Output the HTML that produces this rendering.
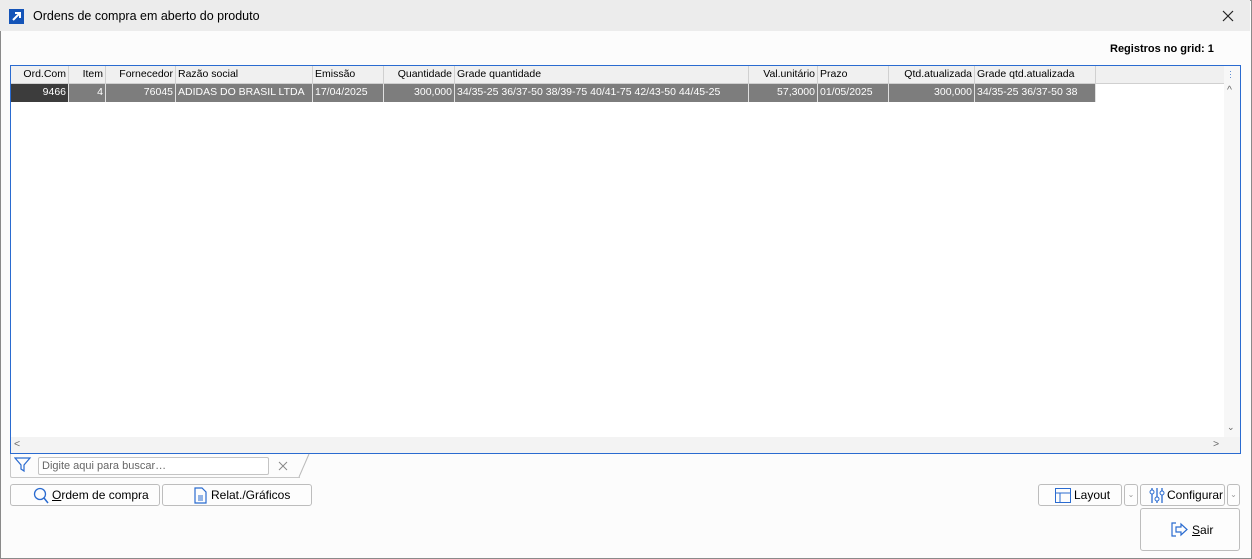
<!DOCTYPE html><html><head><style>
*{margin:0;padding:0;box-sizing:border-box}
body{width:1252px;height:559px;background:#fcfcfc;font-family:"Liberation Sans",sans-serif;font-size:11px;color:#000;position:relative;overflow:hidden}
.win{position:absolute;left:0;top:0;width:1252px;height:559px;border:1px solid #8a8a8a}
.title{position:absolute;left:0;top:0;width:1250px;height:31px;background:#ececec}
.title .t{position:absolute;left:33px;top:9px;font-size:12.5px}
.ico{position:absolute;left:9px;top:9px;width:15px;height:15px;background:#1454b8}
.a{position:absolute}
.grid{position:absolute;left:10px;top:65px;width:1231px;height:389px;border:1px solid #2a6bd0;background:#fff;font-size:10.5px}
.hd,.rw{position:absolute;height:18px;line-height:17px;white-space:nowrap;overflow:hidden;padding:0 2px}
.hd{top:0;background:#f0f0f0;border-right:1px solid #d0d0d0;border-bottom:1px solid #d0d0d0}
.rw{top:18px;background:#7d7d7d;color:#fff;border-right:1px solid #e0e0e0}
.r{text-align:right}
.btn{position:absolute;height:22px;border:1px solid #bdbdbd;border-radius:3px;background:#fdfdfd;line-height:20px;font-size:12px}
</style></head><body><div class="win"></div>
<div class="title"><div class="ico"><svg width="15" height="15"><path d="M4 11 L11 4 M6 4 H11 V9" stroke="#fff" stroke-width="2" fill="none"/></svg></div><div class="t">Ordens de compra em aberto do produto</div>
<svg class="a" style="left:1222px;top:10px" width="12" height="12"><path d="M1 1 L11 11 M11 1 L1 11" stroke="#222" stroke-width="1.2"/></svg></div>
<div class="a" style="left:1110px;top:43px;font-weight:bold;font-size:11px">Registros no grid: 1</div>
<div class="grid">
<div class="hd r" style="left:0;width:58px">Ord.Com</div>
<div class="hd r" style="left:58px;width:37px">Item</div>
<div class="hd r" style="left:95px;width:70px">Fornecedor</div>
<div class="hd" style="left:165px;width:137px">Razão social</div>
<div class="hd" style="left:302px;width:71px">Emissão</div>
<div class="hd r" style="left:373px;width:71px">Quantidade</div>
<div class="hd" style="left:444px;width:294px">Grade quantidade</div>
<div class="hd r" style="left:738px;width:69px">Val.unitário</div>
<div class="hd" style="left:807px;width:71px">Prazo</div>
<div class="hd r" style="left:878px;width:86px">Qtd.atualizada</div>
<div class="hd" style="left:964px;width:121px">Grade qtd.atualizada</div>
<div class="hd" style="left:1085px;width:129px;border-right:none"></div>
<div class="rw r" style="left:0;width:58px;background:#3c3c3c">9466</div>
<div class="rw r" style="left:58px;width:37px">4</div>
<div class="rw r" style="left:95px;width:70px">76045</div>
<div class="rw" style="left:165px;width:137px">ADIDAS DO BRASIL LTDA</div>
<div class="rw" style="left:302px;width:71px">17/04/2025</div>
<div class="rw r" style="left:373px;width:71px">300,000</div>
<div class="rw" style="left:444px;width:294px">34/35-25 36/37-50 38/39-75 40/41-75 42/43-50 44/45-25</div>
<div class="rw r" style="left:738px;width:69px">57,3000</div>
<div class="rw" style="left:807px;width:71px">01/05/2025</div>
<div class="rw r" style="left:878px;width:86px">300,000</div>
<div class="rw" style="left:964px;width:121px">34/35-25 36/37-50 38</div>
<div class="a" style="left:1213px;top:0;width:16px;height:371px;background:#f7f7f7"></div>
<div class="a" style="left:1218px;top:4px;color:#4a7fd0;font-size:9px;line-height:3px">·<br>·<br>·</div>
<div class="a" style="left:1216px;top:18px;color:#666">^</div>
<div class="a" style="left:1216px;top:356px;color:#666;font-size:9px">⌄</div>
<div class="a" style="left:0;top:371px;width:1229px;height:16px;background:#f3f3f3"></div>
<div class="a" style="left:3px;top:372px;color:#666">&lt;</div>
<div class="a" style="left:1202px;top:372px;color:#666">&gt;</div>
</div>
<div class="a" style="left:10px;top:454px;width:290px;height:24px;border:1px solid #c8c8c8;border-top:none;border-right:none;border-radius:0 0 0 2px"></div>
<svg class="a" style="left:14px;top:457px" width="18" height="16"><path d="M1 1 H16 L10 8 V14 L7 12 V8 Z" fill="none" stroke="#2a6bd0" stroke-width="1.2"/></svg>
<div class="a" style="left:38px;top:457px;width:231px;height:18px;border:1px solid #c4c4c4;border-radius:2px;background:#fff;color:#666;line-height:16px;padding-left:3px">Digite aqui para buscar…</div>
<svg class="a" style="left:278px;top:461px" width="10" height="10"><path d="M1 1 L9 9 M9 1 L1 9" stroke="#888" stroke-width="1"/></svg>
<svg class="a" style="left:290px;top:453px" width="20" height="26"><path d="M19 1 L9 24" stroke="#bbb"/></svg>
<div class="btn" style="left:10px;top:484px;width:150px"><svg class="a" style="left:22px;top:2px" width="16" height="17"><circle cx="7" cy="7" r="5.5" fill="none" stroke="#2a6bd0" stroke-width="1.3"/><path d="M11 11 L15 16" stroke="#2a6bd0" stroke-width="1.5"/></svg><span class="a" style="left:41px;top:0"><u>O</u>rdem de compra</span></div>
<div class="btn" style="left:162px;top:484px;width:150px"><svg class="a" style="left:31px;top:2px" width="14" height="17"><path d="M1 1 H8 L12 5 V16 H1 Z" fill="none" stroke="#2a6bd0" stroke-width="1.2"/><path d="M4 9 H9 M4 11 H9 M4 13 H9" stroke="#2a6bd0"/></svg><span class="a" style="left:48px;top:0">Relat./Gráficos</span></div>
<div class="btn" style="left:1038px;top:484px;width:84px"><svg class="a" style="left:16px;top:3px" width="16" height="15"><rect x="0.5" y="0.5" width="15" height="14" fill="none" stroke="#2a6bd0"/><path d="M0.5 5 H15.5 M5 5 V14.5" stroke="#2a6bd0"/></svg><span class="a" style="left:35px;top:0">Layout</span></div>
<div class="btn" style="left:1124px;top:484px;width:14px;color:#999;font-size:8px;text-align:center">⌄</div>
<div class="btn" style="left:1140px;top:484px;width:85px"><svg class="a" style="left:8px;top:2px" width="16" height="17"><path d="M3 1 V16 M8 1 V16 M13 1 V16" stroke="#2a6bd0" stroke-width="1.3"/><circle cx="3" cy="5" r="2" fill="#fff" stroke="#2a6bd0"/><circle cx="8" cy="12" r="2" fill="#fff" stroke="#2a6bd0"/><circle cx="13" cy="6" r="2" fill="#fff" stroke="#2a6bd0"/></svg><span class="a" style="left:26px;top:0">Configurar</span></div>
<div class="btn" style="left:1227px;top:484px;width:13px;color:#999;font-size:8px;text-align:center">⌄</div>
<div class="btn" style="left:1140px;top:508px;width:100px;height:43px"><svg class="a" style="left:30px;top:13px" width="18" height="15"><path d="M5 1 H1 V14 H5" fill="none" stroke="#2a6bd0" stroke-width="1.2"/><path d="M5 5 H10 V2 L16 7.5 L10 13 V10 H5 Z" fill="none" stroke="#2a6bd0" stroke-width="1.2"/></svg><span class="a" style="left:51px;top:11px"><u>S</u>air</span></div>
</body></html>
